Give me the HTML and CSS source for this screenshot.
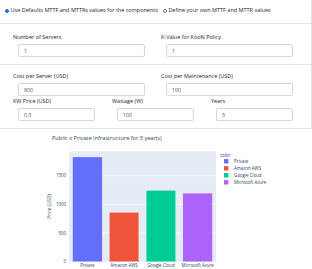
FILE: index.html
```html
<!DOCTYPE html>
<html>
<head>
<meta charset="utf-8">
<link rel="stylesheet" href="styles.css">
</head>
<body>
<div class="panel">
  <div class="sec sec-radio">
    <label class="radio"><span class="dot on"></span>Use Defaults MTTF and MTTRs values for the components</label>
    <label class="radio"><span class="dot"></span>Define your own MTTF and MTTR values</label>
  </div>
  <div class="sec sec-a">
    <div class="grid2">
      <div class="field"><div class="lbl">Number of Servers</div><input class="inp" value="1"></div>
      <div class="field"><div class="lbl">K-Value for KooN Policy</div><input class="inp" value="1"></div>
    </div>
  </div>
  <div class="sec sec-b">
    <div class="grid2">
      <div class="field"><div class="lbl">Cost per Server (USD)</div><input class="inp" value="800"></div>
      <div class="field"><div class="lbl">Cost per Maintenance (USD)</div><input class="inp" value="100"></div>
    </div>
    <div class="grid3">
      <div class="field"><div class="lbl">KW Price (USD)</div><input class="inp" value="0.3"></div>
      <div class="field"><div class="lbl">Wattage (W)</div><input class="inp" value="100"></div>
      <div class="field"><div class="lbl">Years</div><input class="inp" value="3"></div>
    </div>
  </div>
</div>
<svg class="chart" width="312" height="139" viewBox="0 130 312 139" xmlns="http://www.w3.org/2000/svg">
  <text class="c-title" x="52" y="141">Public x Private Infrastructure for 3 year(s)</text>
  <rect x="69" y="152.3" width="147" height="110.4" fill="#E5ECF6"/>
  <g stroke="#fff" stroke-width="0.6">
    <line x1="69" x2="216" y1="234.0" y2="234.0"/>
    <line x1="69" x2="216" y1="205.4" y2="205.4"/>
    <line x1="69" x2="216" y1="176.7" y2="176.7"/>
  </g>
  <g stroke="#E5ECF6" stroke-width="0.3">
    <rect x="72.7" y="158.0" width="29.4" height="104.7" fill="#636efa"/>
    <rect x="109.4" y="213.5" width="29.4" height="49.2" fill="#EF553B"/>
    <rect x="146.2" y="191.5" width="29.4" height="71.2" fill="#00cc96"/>
    <rect x="182.9" y="194.2" width="29.4" height="68.5" fill="#ab63fa"/>
  </g>
  <g class="c-tick" text-anchor="end">
    <text x="66" y="264.3">0</text>
    <text x="66" y="235.6">500</text>
    <text x="66" y="207.0">1000</text>
    <text x="66" y="178.3">1500</text>
  </g>
  <g class="c-tick" text-anchor="middle">
    <text x="87.4" y="268.3">Private</text>
    <text x="124.1" y="268.3">Amazon AWS</text>
    <text x="160.9" y="268.3">Google Cloud</text>
    <text x="197.6" y="268.3">Microsoft Azure</text>
  </g>
  <text class="c-axis" text-anchor="middle" transform="translate(50.5 207.5) rotate(-90)">Price (USD)</text>
  <text class="c-tick" x="220" y="157.6">color</text>
  <rect x="224" y="160.1" width="4.4" height="4.4" fill="#636efa"/>
  <rect x="224" y="167.1" width="4.4" height="4.4" fill="#EF553B"/>
  <rect x="224" y="174.1" width="4.4" height="4.4" fill="#00cc96"/>
  <rect x="224" y="181.1" width="4.4" height="4.4" fill="#ab63fa"/>
  <g class="c-tick">
    <text x="234" y="163.9">Private</text>
    <text x="234" y="170.9">Amazon AWS</text>
    <text x="234" y="177.9">Google Cloud</text>
    <text x="234" y="184.9">Microsoft Azure</text>
  </g>
</svg>
</body>
</html>
```
FILE: styles.css
```css
html, body {
  margin: 0;
  padding: 0;
  background: #fff;
}
body {
  font-family: "Open Sans", "Liberation Sans", sans-serif;
  color: #212529;
  width: 312px;
  overflow: hidden;
}
.panel {
  width: 312px;
  box-sizing: border-box;
  border-right: 1px solid #e3e3e3;
}
.sec {
  border-bottom: 1px solid #e3e3e3;
}
.sec-radio {
  height: 24px;
  display: flex;
  align-items: flex-start;
  padding-left: 5px;
  box-sizing: border-box;
  padding-top: 6px;
  gap: 5px;
}
.radio {
  display: flex;
  align-items: center;
  font-size: 5.5px;
  line-height: 9px;
  white-space: nowrap;
}
.dot {
  width: 4px;
  height: 4px;
  box-sizing: border-box;
  border-radius: 50%;
  border: 0.6px solid #6c757d;
  margin-right: 1.5px;
  background: #fff;
}
.dot.on {
  background: #1a6fe8;
  border-color: #1a6fe8;
}
.sec-a {
  padding: 9px 0 7px 13px;
}
.sec-b {
  padding: 7px 0 7px 13px;
}
.grid2 {
  display: grid;
  grid-template-columns: 148px 148px;
}
.grid3 {
  display: grid;
  grid-template-columns: 99px 99px 99px;
  margin-top: 1px;
}
.lbl {
  font-size: 5.5px;
  line-height: 8px;
  height: 8px;
  margin-bottom: 3px;
  white-space: nowrap;
}
.inp {
  display: block;
  box-sizing: border-box;
  height: 13px;
  width: 127px;
  margin: 0 0 0 5px;
  padding: 0 0 0 5px;
  border: 1px solid #d4d8dd;
  border-radius: 2px;
  font-family: "Open Sans", "Liberation Sans", sans-serif;
  font-size: 5.2px;
  color: #495057;
  background: #fff;
  outline: none;
}
.grid3 .inp {
  width: 77px;
}
.chart {
  display: block;
}
.c-title {
  font-family: "Open Sans", sans-serif;
  font-size: 5.6px;
  fill: #2a3f5f;
}
.c-tick {
  font-family: "Open Sans", sans-serif;
  font-size: 4.4px;
  fill: #2a3f5f;
}
.c-axis {
  font-family: "Open Sans", sans-serif;
  font-size: 4.8px;
  fill: #2a3f5f;
}
```
